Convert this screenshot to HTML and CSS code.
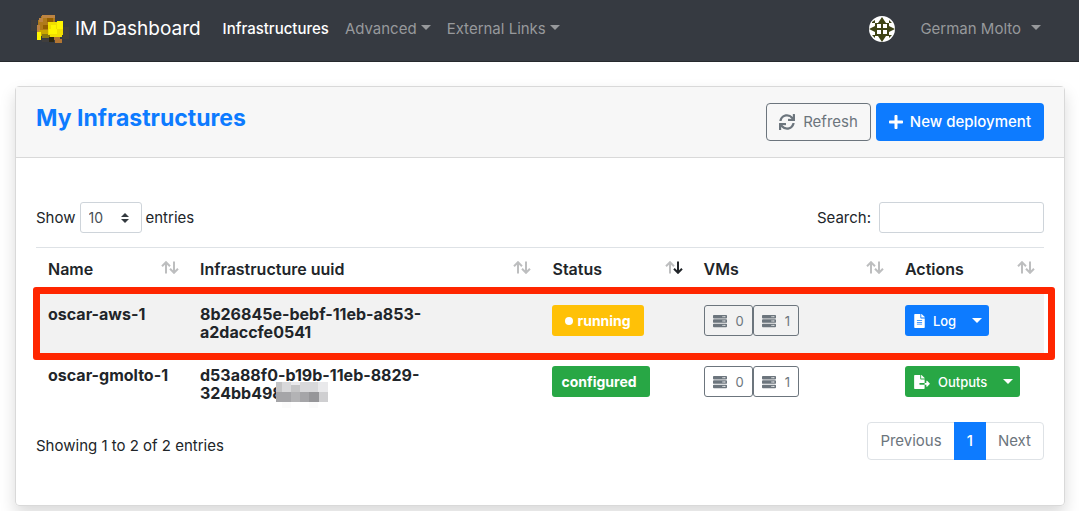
FILE: index.html
```
<!DOCTYPE html>
<html lang="en">
<head>
    <meta charset="UTF-8">
    <meta name="viewport" content="width=device-width, initial-scale=1.0">
    <title>IM Dashboard</title>
    <link rel="stylesheet" href="styles.css">
</head>
<body>
    <!-- shared icons -->
    <svg class="sprite" aria-hidden="true">
        <symbol id="sync" viewBox="0 0 512 512"><path d="M440.65 12.57l4 82.77A247.16 247.16 0 0 0 255.83 8C134.73 8 33.91 94.92 12.29 209.82A12 12 0 0 0 24.09 224h49.05a12 12 0 0 0 11.67-9.26 175.91 175.91 0 0 1 317-56.94l-101.46-4.86a12 12 0 0 0-12.57 12v47.41a12 12 0 0 0 12 12H500a12 12 0 0 0 12-12V12a12 12 0 0 0-12-12h-47.37a12 12 0 0 0-11.98 12.57zM255.83 432a175.61 175.61 0 0 1-146-77.8l101.8 4.87a12 12 0 0 0 12.57-12v-47.4a12 12 0 0 0-12-12H12a12 12 0 0 0-12 12V500a12 12 0 0 0 12 12h47.35a12 12 0 0 0 12-12.6l-4.15-82.57A247.17 247.17 0 0 0 255.83 504c121.11 0 221.93-86.92 243.55-201.82a12 12 0 0 0-11.8-14.18h-49.05a12 12 0 0 0-11.67 9.26A175.86 175.86 0 0 1 255.83 432z"/></symbol>
        <symbol id="plus" viewBox="0 0 448 512"><path d="M416 208H272V64c0-17.67-14.33-32-32-32h-32c-17.67 0-32 14.33-32 32v144H32c-17.67 0-32 14.33-32 32v32c0 17.67 14.33 32 32 32h144v144c0 17.67 14.33 32 32 32h32c17.67 0 32-14.33 32-32V304h144c17.67 0 32-14.33 32-32v-32c0-17.67-14.33-32-32-32z"/></symbol>
        <symbol id="server" viewBox="0 0 512 512"><path fill-rule="evenodd" d="M32 32h448a32 32 0 0 1 32 32v64a32 32 0 0 1-32 32H32a32 32 0 0 1-32-32V64a32 32 0 0 1 32-32zM432 72a24 24 0 1 0 0 48 24 24 0 0 0 0-48zM368 72a24 24 0 1 0 0 48 24 24 0 0 0 0-48zM32 192h448a32 32 0 0 1 32 32v64a32 32 0 0 1-32 32H32a32 32 0 0 1-32-32v-64a32 32 0 0 1 32-32zM432 232a24 24 0 1 0 0 48 24 24 0 0 0 0-48zM368 232a24 24 0 1 0 0 48 24 24 0 0 0 0-48zM32 352h448a32 32 0 0 1 32 32v64a32 32 0 0 1-32 32H32a32 32 0 0 1-32-32v-64a32 32 0 0 1 32-32zM432 392a24 24 0 1 0 0 48 24 24 0 0 0 0-48zM368 392a24 24 0 1 0 0 48 24 24 0 0 0 0-48z"/></symbol>
        <symbol id="file-alt" viewBox="0 0 384 512"><path d="M224 136V0H24C10.7 0 0 10.7 0 24v464c0 13.3 10.7 24 24 24h336c13.3 0 24-10.7 24-24V160H248c-13.2 0-24-10.8-24-24zm64 236c0 6.6-5.4 12-12 12H108c-6.6 0-12-5.4-12-12v-8c0-6.6 5.4-12 12-12h168c6.6 0 12 5.4 12 12v8zm0-64c0 6.6-5.4 12-12 12H108c-6.6 0-12-5.4-12-12v-8c0-6.6 5.4-12 12-12h168c6.6 0 12 5.4 12 12v8zm0-72v8c0 6.6-5.4 12-12 12H108c-6.6 0-12-5.4-12-12v-8c0-6.6 5.4-12 12-12h168c6.6 0 12 5.4 12 12zm96-114.1v6.1H256V0h6.1c6.4 0 12.5 2.5 17 7l97.9 98c4.5 4.5 7 10.6 7 16.9z"/></symbol>
        <symbol id="file-export" viewBox="0 0 576 512"><path d="M384 121.9c0-6.3-2.5-12.4-7-16.9L279.1 7c-4.5-4.5-10.6-7-17-7H256v128h128zM571 308l-95.7-96.4c-10.1-10.1-27.4-3-27.4 11.3V288h-64v64h64v65.2c0 14.3 17.3 21.4 27.4 11.3L571 332c6.6-6.6 6.6-17.4 0-24zm-379 28v-32c0-8.8 7.2-16 16-16h176V160H248c-13.2 0-24-10.8-24-24V0H24C10.7 0 0 10.7 0 24v464c0 13.3 10.7 24 24 24h336c13.3 0 24-10.7 24-24V352H208c-8.8 0-16-7.2-16-16z"/></symbol>
        <symbol id="sort" viewBox="0 0 18 13">
            <path class="sort-up" d="M5 12.5V1.5M1 5.2L5 1.2L9 5.2"/>
            <path class="sort-down" d="M13 0.5V11.5M9 7.8L13 11.8L17 7.8"/>
        </symbol>
    </svg>

    <nav class="navbar">
        <a class="brand" href="#">
            <svg class="logo" viewBox="0 0 38 29">
                <path fill="#403e3d" d="M0 6h6v11H0zM32 13h6v12h-6zM11 25h11v3H11z"/>
                <path fill="#b07a1a" d="M10 2h14v6H10zM7 6h16v14H7z"/>
                <path fill="#bd8443" d="M11 1h13v3H11zM8 4h4v4H8zM6 11h3v8H6z"/>
                <path fill="#935e00" d="M16 4h6v4h-6zM12 11h5v4h-5z"/>
                <path fill="#c9a600" d="M8 16h13v6H8z"/>
                <path fill="#8a7a10" d="M11 20h10v4H11z"/>
                <path fill="#f2df00" d="M17 8h15v13H17zM19 20h12v3H19z"/>
                <path fill="#fff500" d="M20 11h5v5h-5zM26 7h6v8h-6zM18 15h8v5h-8zM6 18h4v8H6z"/>
                <path fill="#2e2710" d="M18 23h5v5h-5z"/>
                <path fill="#b47632" d="M23 23h6v3h-6zM24 25h7v4h-7z"/>
            </svg>
            IM Dashboard
        </a>
        <ul class="nav">
            <li><a class="nav-link active" href="#">Infrastructures</a></li>
            <li><a class="nav-link caret" href="#">Advanced</a></li>
            <li><a class="nav-link caret" href="#">External Links</a></li>
        </ul>
        <div class="user">
            <svg class="avatar" viewBox="0 0 26 26">
                <circle cx="13" cy="13" r="13" fill="#fff"/>
                <path fill="#3f4415" d="M13 1l4 6h3v3l6 3-6 3v4h-3l-4 6-4-6H6v-4l-6-3 6-3V7h3zM3 6l3-2v3H3zM20 4l3 3h-3zM3 19h3v3zM20 19h3l-3 3z"/>
                <path fill="#fff" d="M8 8h4v4H8zM14 8h4v4h-4zM8 14h4v4H8zM14 14h4v4h-4z"/>
            </svg>
            <a class="user-link caret" href="#">German Molto</a>
        </div>
    </nav>

    <main class="card">
        <div class="card-header">
            <h1>My Infrastructures</h1>
            <div class="header-buttons">
                <button type="button" class="btn btn-outline"><svg class="icon"><use href="#sync"/></svg>Refresh</button>
                <button type="button" class="btn btn-primary"><svg class="icon icon-plus"><use href="#plus"/></svg>New deployment</button>
            </div>
        </div>

        <div class="card-body">
            <div class="table-bar">
                <label>Show
                    <span class="select-wrap">
                        <select>
                            <option>10</option>
                            <option>25</option>
                            <option>50</option>
                            <option>100</option>
                        </select>
                        <svg viewBox="0 0 8 10"><path d="M0 4l4-4 4 4zM0 6l4 4 4-4z"/></svg>
                    </span>
                    entries</label>
                <label class="search">Search: <input type="search"></label>
            </div>

            <table>
                <thead>
                    <tr>
                        <th class="col-name">Name<svg class="sort"><use href="#sort"/></svg></th>
                        <th class="col-uuid">Infrastructure uuid<svg class="sort"><use href="#sort"/></svg></th>
                        <th class="col-status">Status<svg class="sort sorted"><use href="#sort"/></svg></th>
                        <th class="col-vms">VMs<svg class="sort"><use href="#sort"/></svg></th>
                        <th class="col-actions">Actions<svg class="sort"><use href="#sort"/></svg></th>
                    </tr>
                </thead>
                <tbody>
                    <tr class="odd highlight">
                        <td>oscar-aws-1</td>
                        <td>8b26845e-bebf-11eb-a853-<br>a2daccfe0541</td>
                        <td><span class="badge badge-warning"><span class="dot"></span>running</span></td>
                        <td>
                            <div class="group">
                                <button type="button" class="btn btn-sm btn-outline"><svg class="icon"><use href="#server"/></svg>0</button>
                                <button type="button" class="btn btn-sm btn-outline"><svg class="icon"><use href="#server"/></svg>1</button>
                            </div>
                        </td>
                        <td>
                            <div class="group split">
                                <button type="button" class="btn btn-sm btn-primary"><svg class="icon icon-file"><use href="#file-alt"/></svg>Log</button>
                                <button type="button" class="btn btn-sm btn-primary toggle caret" aria-label="More log actions"></button>
                            </div>
                        </td>
                    </tr>
                    <tr>
                        <td>oscar-gmolto-1</td>
                        <td>d53a88f0-b19b-11eb-8829-<br>324bb49<span class="redacted">8<svg viewBox="0 0 52 26">
                            <path fill="#fbfbfb" d="M0 0h52v20H0zM6 20h9v6H6zM33 20h9v6h-9z"/>
                            <path fill="#c4c4c5" d="M0 0h6v10H0zM15 3h9v7h-9z"/>
                            <path fill="#d8d8da" d="M6 0h9v10H6zM24 0h9v10h-9zM33 0h9v10h-9z"/>
                            <path fill="#e9e9eb" d="M15 0h9v3h-9zM42 0h10v10H42z"/>
                            <path fill="#a5a5a8" d="M0 10h15v10H0zM24 10h9v10h-9z"/>
                            <path fill="#b3b3b5" d="M15 10h9v10h-9z"/>
                            <path fill="#969699" d="M33 10h10v10H33z"/>
                            <path fill="#cfcfd1" d="M43 10h9v10h-9z"/>
                        </svg></span></td>
                        <td><span class="badge badge-success">configured</span></td>
                        <td>
                            <div class="group">
                                <button type="button" class="btn btn-sm btn-outline"><svg class="icon"><use href="#server"/></svg>0</button>
                                <button type="button" class="btn btn-sm btn-outline"><svg class="icon"><use href="#server"/></svg>1</button>
                            </div>
                        </td>
                        <td>
                            <div class="group split">
                                <button type="button" class="btn btn-sm btn-success"><svg class="icon icon-export"><use href="#file-export"/></svg>Outputs</button>
                                <button type="button" class="btn btn-sm btn-success toggle caret" aria-label="More output actions"></button>
                            </div>
                        </td>
                    </tr>
                </tbody>
            </table>

            <div class="table-footer">
                <div class="table-info">Showing 1 to 2 of 2 entries</div>
                <ul class="pagination">
                    <li><a href="#">Previous</a></li>
                    <li><a class="active" href="#">1</a></li>
                    <li><a href="#">Next</a></li>
                </ul>
            </div>
        </div>
    </main>
</body>
</html>
```
FILE: styles.css
```
* {
    box-sizing: border-box;
}
body {
    margin: 0;
    background-color: #fff;
    color: #212529;
    font-family: Inter, "Liberation Sans", sans-serif;
    font-size: 15px;
    line-height: 24px;
}
a {
    text-decoration: none;
}
ul {
    list-style: none;
    margin: 0;
    padding: 0;
}
.sprite {
    position: absolute;
    width: 0;
    height: 0;
}
.caret::after {
    content: "";
    display: inline-block;
    margin-left: 4px;
    vertical-align: 4px;
    border-top: 5px solid;
    border-left: 5px solid transparent;
    border-right: 5px solid transparent;
}

/* navbar */
.navbar {
    display: flex;
    align-items: center;
    height: 62px;
    padding: 0 38px 4px 31px;
    background-color: #363a41;
    border-bottom: 1px solid #26292d;
}
.brand {
    display: flex;
    align-items: center;
    gap: 6px;
    margin-right: 14px;
    color: #fff;
    font-size: 19px;
}
.logo {
    width: 38px;
    height: 29px;
}
.nav {
    display: flex;
}
.nav-link {
    padding: 8px;
    color: #97999c;
}
.nav-link.active {
    color: #fff;
    font-weight: 500;
}
.user {
    display: flex;
    align-items: center;
    gap: 25px;
    margin-left: auto;
}
.user-link {
    color: #97999c;
}
.user-link.caret::after {
    margin-left: 10px;
}
.avatar {
    width: 26px;
    height: 26px;
}

/* card */
.card {
    margin: 24px 14px 24px 15px;
    border: 1px solid #d9d9d9;
    border-radius: 4px;
    box-shadow: 0 8px 16px rgba(0,0,0,0.15);
}
.card-header {
    display: flex;
    justify-content: space-between;
    align-items: flex-start;
    padding: 16px 20px;
    background-color: #f7f7f7;
    border-bottom: 1px solid #d9d9d9;
}
h1 {
    margin: 0;
    color: #0d7bff;
    font-size: 23px;
    font-weight: bold;
    line-height: 30px;
}
.header-buttons {
    display: flex;
    gap: 5px;
}
.card-body {
    padding: 44px 20px 45px;
}

/* buttons */
.btn {
    display: flex;
    align-items: center;
    gap: 8px;
    height: 38px;
    padding: 0 12px;
    border: 1px solid transparent;
    border-radius: 4px;
    background: none;
    color: #fff;
    font: inherit;
    cursor: pointer;
}
.btn-outline {
    border-color: #6c757d;
    color: #6c757d;
}
.btn-primary {
    background-color: #0d7bff;
}
.header-buttons .btn-primary {
    gap: 7px;
    font-weight: 500;
}
.btn-success, .badge-success {
    background-color: #28a745;
}
.btn-sm {
    height: 31px;
    padding: 0 8px;
    border-radius: 3px;
    font-size: 13px;
    font-weight: normal;
}
.btn-sm.btn-outline {
    gap: 9px;
}
.icon {
    width: 16px;
    height: 16px;
    fill: currentColor;
}
.icon-plus {
    width: 14px;
}
.btn-sm .icon {
    width: 14px;
    height: 14px;
}
.btn-sm .icon-file {
    width: 11px;
}
.btn-sm .icon-export {
    width: 16px;
}
.group {
    display: flex;
}
.split .btn {
    font-weight: 500;
}
.split .btn:first-child {
    border-radius: 3px 0 0 3px;
}
.split .btn.toggle {
    padding: 0 6px;
    border-radius: 0 3px 3px 0;
}
.toggle.caret::after {
    margin-left: 0;
}

/* length and search controls */
.table-bar {
    display: flex;
    justify-content: space-between;
    margin-bottom: 14px;
}
.table-bar label {
    display: flex;
    align-items: center;
    gap: 4px;
}
.table-bar .search {
    gap: 8px;
}
.select-wrap {
    position: relative;
    display: flex;
}
.select-wrap svg {
    position: absolute;
    top: 11px;
    right: 13px;
    width: 8px;
    height: 10px;
    fill: #343a40;
    pointer-events: none;
}
select, input {
    height: 31px;
    padding: 0 8px;
    border: 1px solid #ced4da;
    border-radius: 3px;
    background-color: #fff;
    color: #495057;
    font-family: inherit;
    font-size: 14px;
}
select {
    appearance: none;
    width: 62px;
}
input {
    width: 165px;
}

/* table */
table {
    width: 100%;
    table-layout: fixed;
    border-collapse: separate;
    border-spacing: 0;
    font-size: 16px;
    line-height: 18px;
}
th, td {
    padding: 12px;
    text-align: left;
    vertical-align: top;
    font-weight: bold;
}
th {
    position: relative;
    border-top: 1px solid #dee2e6;
    border-bottom: 2px solid #dee2e6;
    font-weight: 600;
    line-height: 19px;
}
td {
    height: 61px;
}
.col-name {
    width: 152px;
}
.col-status, .col-actions {
    width: 15%;
}
.col-uuid {
    width: 35%;
}
.col-vms {
    width: 20%;
}
.sort {
    position: absolute;
    top: 13px;
    right: 9px;
    width: 18px;
    height: 13px;
    fill: none;
    stroke: #bdbebf;
    stroke-width: 2;
}
.sorted {
    --down: #212529;
}
.sort-down {
    stroke: var(--down, #bdbebf);
}
.odd td {
    background-color: #f2f2f2;
}
.highlight {
    position: relative;
}
.highlight::after {
    content: "";
    position: absolute;
    top: -6px;
    right: -11px;
    bottom: -6px;
    left: -3px;
    border: 7px solid #ff2600;
    border-radius: 3px;
    pointer-events: none;
}
.badge {
    display: flex;
    align-items: center;
    gap: 4px;
    width: fit-content;
    height: 31px;
    padding: 0 13px 0 9px;
    border-radius: 3px;
    color: #fff;
    font-size: 14px;
    font-weight: bold;
}
.badge-warning {
    padding: 0 13px;
    background-color: #ffc107;
}
.dot {
    width: 8px;
    height: 8px;
    border-radius: 50%;
    background-color: #fff;
}
.redacted {
    position: relative;
}
.redacted svg {
    position: absolute;
    top: -1px;
    left: 4px;
    width: 52px;
    height: 26px;
}

/* footer */
.table-footer {
    display: flex;
    justify-content: space-between;
    align-items: flex-start;
    margin-top: 7px;
}
.table-info {
    padding-top: 12px;
}
.pagination {
    display: flex;
    border: 1px solid #dee2e6;
    border-radius: 4px;
}
.pagination a {
    display: block;
    padding: 6px 12px;
    color: #6c757d;
}
.pagination .active {
    margin: -1px 0;
    padding: 7px 13px;
    background-color: #0d7bff;
    color: #fff;
    font-weight: 500;
}
```
